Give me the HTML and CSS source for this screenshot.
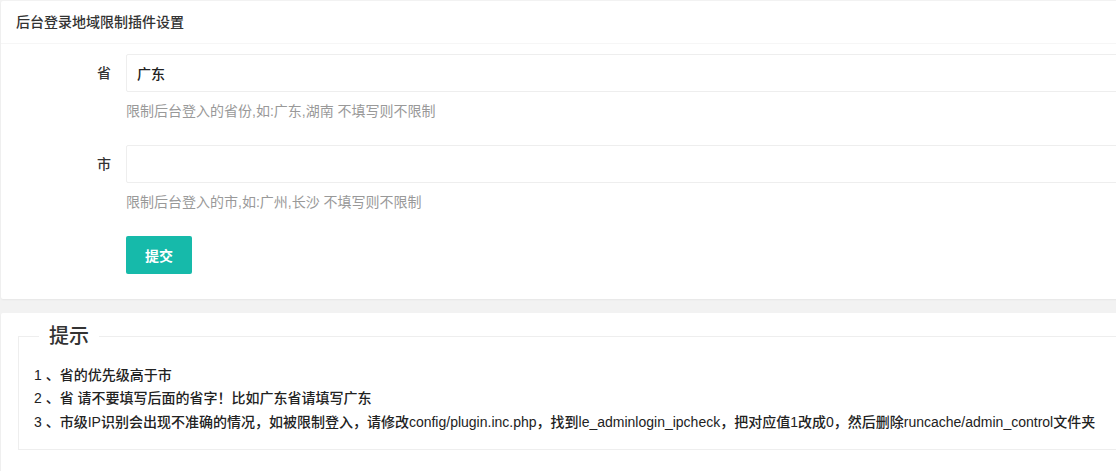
FILE: index.html
```html
<!DOCTYPE html>
<html>
  <head>
    <meta charset="utf-8" />
    <title>后台登录地域限制插件设置</title>
    <link rel="stylesheet" href="styles.css">
  </head>
  <body>
    <div class="page">
      <div class="card">
        <div class="card-header">后台登录地域限制插件设置</div>
        <div class="card-body">
          <form>
            <div class="form-item">
              <label class="form-label" for="province">省</label>
              <div class="input-block">
                <input type="text" id="province" name="province" class="input" value="广东" />
                <div class="form-aux">限制后台登入的省份,如:广东,湖南 不填写则不限制</div>
              </div>
            </div>

            <div class="form-item">
              <label class="form-label" for="city">市</label>
              <div class="input-block">
                <input type="text" id="city" name="city" class="input" />
                <div class="form-aux">限制后台登入的市,如:广州,长沙 不填写则不限制</div>
              </div>
            </div>

            <div class="form-item">
              <div class="input-block">
                <button type="button" class="submit-button">提交</button>
              </div>
            </div>
          </form>
        </div>
      </div>

      <div class="card card-last">
        <div class="card-body">
          <fieldset class="tips">
            <legend>提示</legend>
            <div class="tips-box">
              <p>1 、省的优先级高于市</p>
              <p>2 、省 请不要填写后面的省字！比如广东省请填写广东</p>
              <p>3 、市级IP识别会出现不准确的情况，如被限制登入，请修改config/plugin.inc.php，找到le_adminlogin_ipcheck，把对应值1改成0，然后删除runcache/admin_control文件夹</p>
            </div>
          </fieldset>
        </div>
      </div>
    </div>
  </body>
</html>
```

FILE: styles.css
```css
html {
  overflow: hidden;
}
body {
  margin: 0;
  padding: 1px 0 0 1px;
  background-color: #f2f2f2;
  font-family: "Liberation Sans", Arial, "Noto Sans CJK SC", sans-serif;
  font-size: 14px;
  font-weight: 500;
  color: #333;
}

.page {
  margin-right: -60px;
}

.card {
  background-color: #fff;
  border-radius: 2px;
  box-shadow: 0 1px 2px 0 rgba(0, 0, 0, 0.05);
  margin-bottom: 14px;
}
.card-last {
  padding-bottom: 20px;
}
.card-header {
  height: 42px;
  line-height: 42px;
  padding: 0 15px;
  border-bottom: 1px solid #f6f6f6;
  color: #333;
}
.card-body {
  padding: 10px 15px;
}

.form-item {
  display: flex;
  margin-bottom: 15px;
}
.form-label {
  width: 80px;
  padding: 9px 15px;
  line-height: 20px;
  text-align: right;
  flex-shrink: 0;
}
.form-item .input-block:only-child {
  margin-left: 110px;
}
.input-block {
  flex: 1;
}
.input {
  display: block;
  box-sizing: border-box;
  width: 100%;
  height: 38px;
  padding: 0 10px;
  border: 1px solid #eee;
  border-radius: 2px;
  font-family: inherit;
  font-size: 14px;
  font-weight: 500;
  color: #222;
  outline: none;
}
.form-aux {
  padding: 9px 0;
  line-height: 20px;
  font-weight: normal;
  color: #999;
}

.submit-button {
  height: 38px;
  padding: 0 18px;
  border: 1px solid transparent;
  border-radius: 2px;
  background-color: #16baaa;
  color: #fff;
  font-family: inherit;
  font-size: 14px;
  font-weight: bold;
  cursor: pointer;
}

.tips {
  margin: 0 2px 10px;
  padding: 0;
  border: 1px solid #eee;
}
.tips legend {
  margin-left: 20px;
  padding: 0 10px;
  font-size: 20px;
  line-height: 26px;
}
.tips-box {
  padding: 15px;
}
.tips-box p {
  margin: 0;
  line-height: 23.4px;
  color: #222;
}
```
